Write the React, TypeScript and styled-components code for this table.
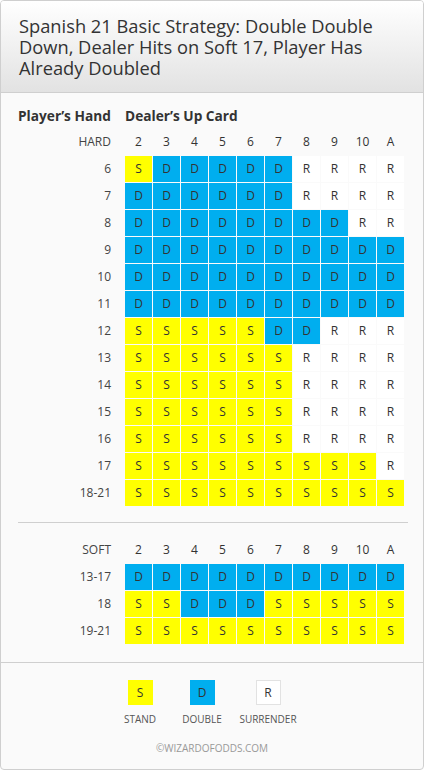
import React from 'react';
import styled, {createGlobalStyle} from 'styled-components';

const GlobalStyle = createGlobalStyle`
  html, body {
    margin: 0;
    padding: 0;
    background: #fff;
  }
  body {
    font-family: "Open Sans", "Liberation Sans", sans-serif;
    color: #333;
  }
`;

type Move = 'S' | 'D' | 'R';

const COLS = ['2', '3', '4', '5', '6', '7', '8', '9', '10', 'A'];

const hardRows: [string, string][] = [
    ['6', 'SDDDDDRRRR'],
    ['7', 'DDDDDDRRRR'],
    ['8', 'DDDDDDDDRR'],
    ['9', 'DDDDDDDDDD'],
    ['10', 'DDDDDDDDDD'],
    ['11', 'DDDDDDDDDD'],
    ['12', 'SSSSSDDRRR'],
    ['13', 'SSSSSSRRRR'],
    ['14', 'SSSSSSRRRR'],
    ['15', 'SSSSSSRRRR'],
    ['16', 'SSSSSSRRRR'],
    ['17', 'SSSSSSSSSR'],
    ['18-21', 'SSSSSSSSSS'],
];

const softRows: [string, string][] = [
    ['13-17', 'DDDDDDDDDD'],
    ['18', 'SSDDDSSSSS'],
    ['19-21', 'SSSSSSSSSS'],
];

const colors: Record<Move, string> = {
    S: '#ffff00',
    D: '#00aeef',
    R: '#ffffff',
};

const Card = styled.div`
  box-sizing: border-box;
  width: 424px;
  min-height: 770px;
  border: 1px solid #cfcfcf;
  border-radius: 4px;
  background: #fafafa;
  overflow: hidden;
`;

const Header = styled.div`
  padding: 14px 18px 14px 18px;
  background: linear-gradient(#ffffff, #e2e2e2);
  border-bottom: 1px solid #cfcfcf;
  h1 {
    margin: 0;
    font-size: 18.3px;
    line-height: 21px;
    font-weight: 400;
    color: #333;
  }
`;

const Section = styled.div`
  padding: 13px 15px 0 17px;
`;

const Titles = styled.div`
  display: grid;
  grid-template-columns: 107px auto;
  font-size: 13.7px;
  font-weight: 700;
  line-height: 20px;
  margin-bottom: 3px;
  color: #333;
`;

const Grid = styled.div`
  display: grid;
  grid-template-columns: 106px repeat(10, 27px);
  grid-auto-rows: 26px;
  column-gap: 1px;
  row-gap: 1px;
`;

const RowLabel = styled.div`
  padding-right: 13px;
  text-align: right;
  font-size: 12px;
  line-height: 26px;
  color: #444;
`;

const ColHead = styled.div`
  text-align: center;
  font-size: 12px;
  line-height: 26px;
  color: #333;
`;

const Cell = styled.div<{$move: Move}>`
  background: ${p => colors[p.$move]};
  text-align: center;
  font-size: 12px;
  line-height: 26px;
  color: #333;
`;

const Divider = styled.hr`
  margin: 16px 0 14px 0;
  border: 0;
  border-top: 1px solid #cfcfcf;
  width: 390px;
`;

const Footer = styled.div`
  margin-top: 18px;
  border-top: 1px solid #cfcfcf;
  padding: 17px 0 14px;
  display: flex;
  flex-direction: column;
  align-items: center;
`;

const Legend = styled.div`
  display: grid;
  grid-template-columns: 62px 62px 70px;
  padding-right: 12px;
`;

const LegendItem = styled.div`
  display: flex;
  flex-direction: column;
  align-items: center;
  gap: 7px;
`;

const Swatch = styled.div<{$move: Move}>`
  box-sizing: border-box;
  width: 25px;
  height: 25px;
  background: ${p => colors[p.$move]};
  border: ${p => (p.$move === 'R' ? '1px solid #e2e2e2' : 'none')};
  font-size: 12px;
  line-height: ${p => (p.$move === 'R' ? '23px' : '25px')};
  text-align: center;
  color: #333;
`;

const LegendLabel = styled.div`
  font-size: 10px;
  line-height: 14px;
  color: #555;
  white-space: nowrap;
`;

const Copyright = styled.div`
  margin-top: 15px;
  font-size: 10px;
  line-height: 14px;
  color: #999;
`;

const StrategyGrid = ({head, rows}: {head: string; rows: [string, string][]}) => (
    <Grid>
        <RowLabel>{head}</RowLabel>
        {COLS.map(c => <ColHead key={c}>{c}</ColHead>)}
        {rows.map(([label, moves]) => (
            <React.Fragment key={label}>
                <RowLabel>{label}</RowLabel>
                {moves.split('').map((m, i) => (
                    <Cell key={i} $move={m as Move}>{m}</Cell>
                ))}
            </React.Fragment>
        ))}
    </Grid>
);

export default function App() {
    return (
        <Card>
            <GlobalStyle/>
            <Header>
                <h1>Spanish 21 Basic Strategy: Double Double Down, Dealer Hits on Soft 17, Player Has Already Doubled</h1>
            </Header>
            <Section>
                <Titles>
                    <span>Player’s Hand</span>
                    <span>Dealer’s Up Card</span>
                </Titles>
                <StrategyGrid head="HARD" rows={hardRows}/>
                <Divider/>
                <StrategyGrid head="SOFT" rows={softRows}/>
            </Section>
            <Footer>
                <Legend>
                    <LegendItem>
                        <Swatch $move="S">S</Swatch>
                        <LegendLabel>STAND</LegendLabel>
                    </LegendItem>
                    <LegendItem>
                        <Swatch $move="D">D</Swatch>
                        <LegendLabel>DOUBLE</LegendLabel>
                    </LegendItem>
                    <LegendItem>
                        <Swatch $move="R">R</Swatch>
                        <LegendLabel>SURRENDER</LegendLabel>
                    </LegendItem>
                </Legend>
                <Copyright>©WIZARDOFODDS.COM</Copyright>
            </Footer>
        </Card>
    );
}
